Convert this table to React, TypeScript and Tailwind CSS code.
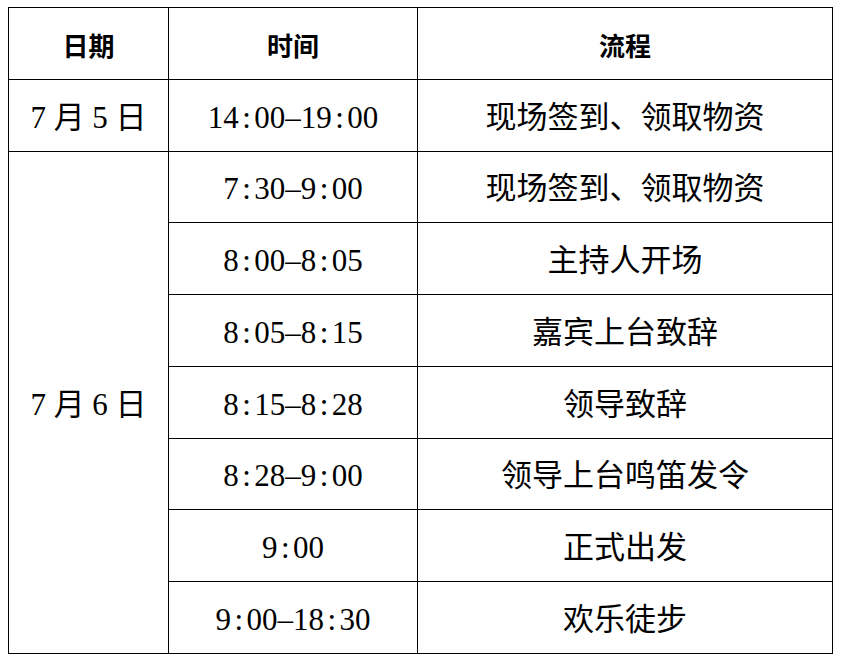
const ROWS = [
  { time: '7:30-9:00', step: '现场签到、领取物资', h: 'h-[71px]' },
  { time: '8:00-8:05', step: '主持人开场', h: 'h-[72px]' },
  { time: '8:05-8:15', step: '嘉宾上台致辞', h: 'h-[72px]' },
  { time: '8:15-8:28', step: '领导致辞', h: 'h-[72px]' },
  { time: '8:28-9:00', step: '领导上台鸣笛发令', h: 'h-[71px]' },
  { time: '9:00', step: '正式出发', h: 'h-[72px]' },
  { time: '9:00-18:30', step: '欢乐徒步', h: 'h-[72px]' },
]

// SimSun style: every half-width character takes 0.5em
function Time({ value }: { value: string }) {
  return (
    <>
      {value.split('').map((ch, i) =>
        ch === ':' || ch === '-' ? (
          <span key={i} className="inline-block w-[0.5em] text-center">{ch === '-' ? '–' : ch}</span>
        ) : (
          <span key={i}>{ch}</span>
        )
      )}
    </>
  )
}

const cell = 'border border-black text-center align-middle p-0'
const body = `${cell} pt-[5px] font-['Liberation_Serif','Noto_Sans_CJK_SC',serif] text-[31px] font-normal text-black`
const head = `${cell} pt-[2px] font-['Noto_Sans_CJK_SC',sans-serif] text-[26px] font-bold text-black`

export default function App() {
  return (
    <div className="w-[842px] h-[665px] bg-white pt-[7px] pl-[8px]">
      <table className="border-collapse table-fixed w-[824px]">
        <colgroup>
          <col className="w-[160px]" />
          <col className="w-[249px]" />
          <col className="w-[415px]" />
        </colgroup>
        <thead>
          <tr className="h-[72px]">
            <th className={head}>日期</th>
            <th className={head}>时间</th>
            <th className={head}>流程</th>
          </tr>
        </thead>
        <tbody>
          <tr className="h-[72px]">
            <td className={body}>7 月 5 日</td>
            <td className={body}><Time value="14:00-19:00" /></td>
            <td className={body}>现场签到、领取物资</td>
          </tr>
          {ROWS.map((row, i) => (
            <tr key={i} className={row.h}>
              {i === 0 && (
                <td rowSpan={ROWS.length} className={body}>7 月 6 日</td>
              )}
              <td className={body}><Time value={row.time} /></td>
              <td className={body}>{row.step}</td>
            </tr>
          ))}
        </tbody>
      </table>
    </div>
  )
}
